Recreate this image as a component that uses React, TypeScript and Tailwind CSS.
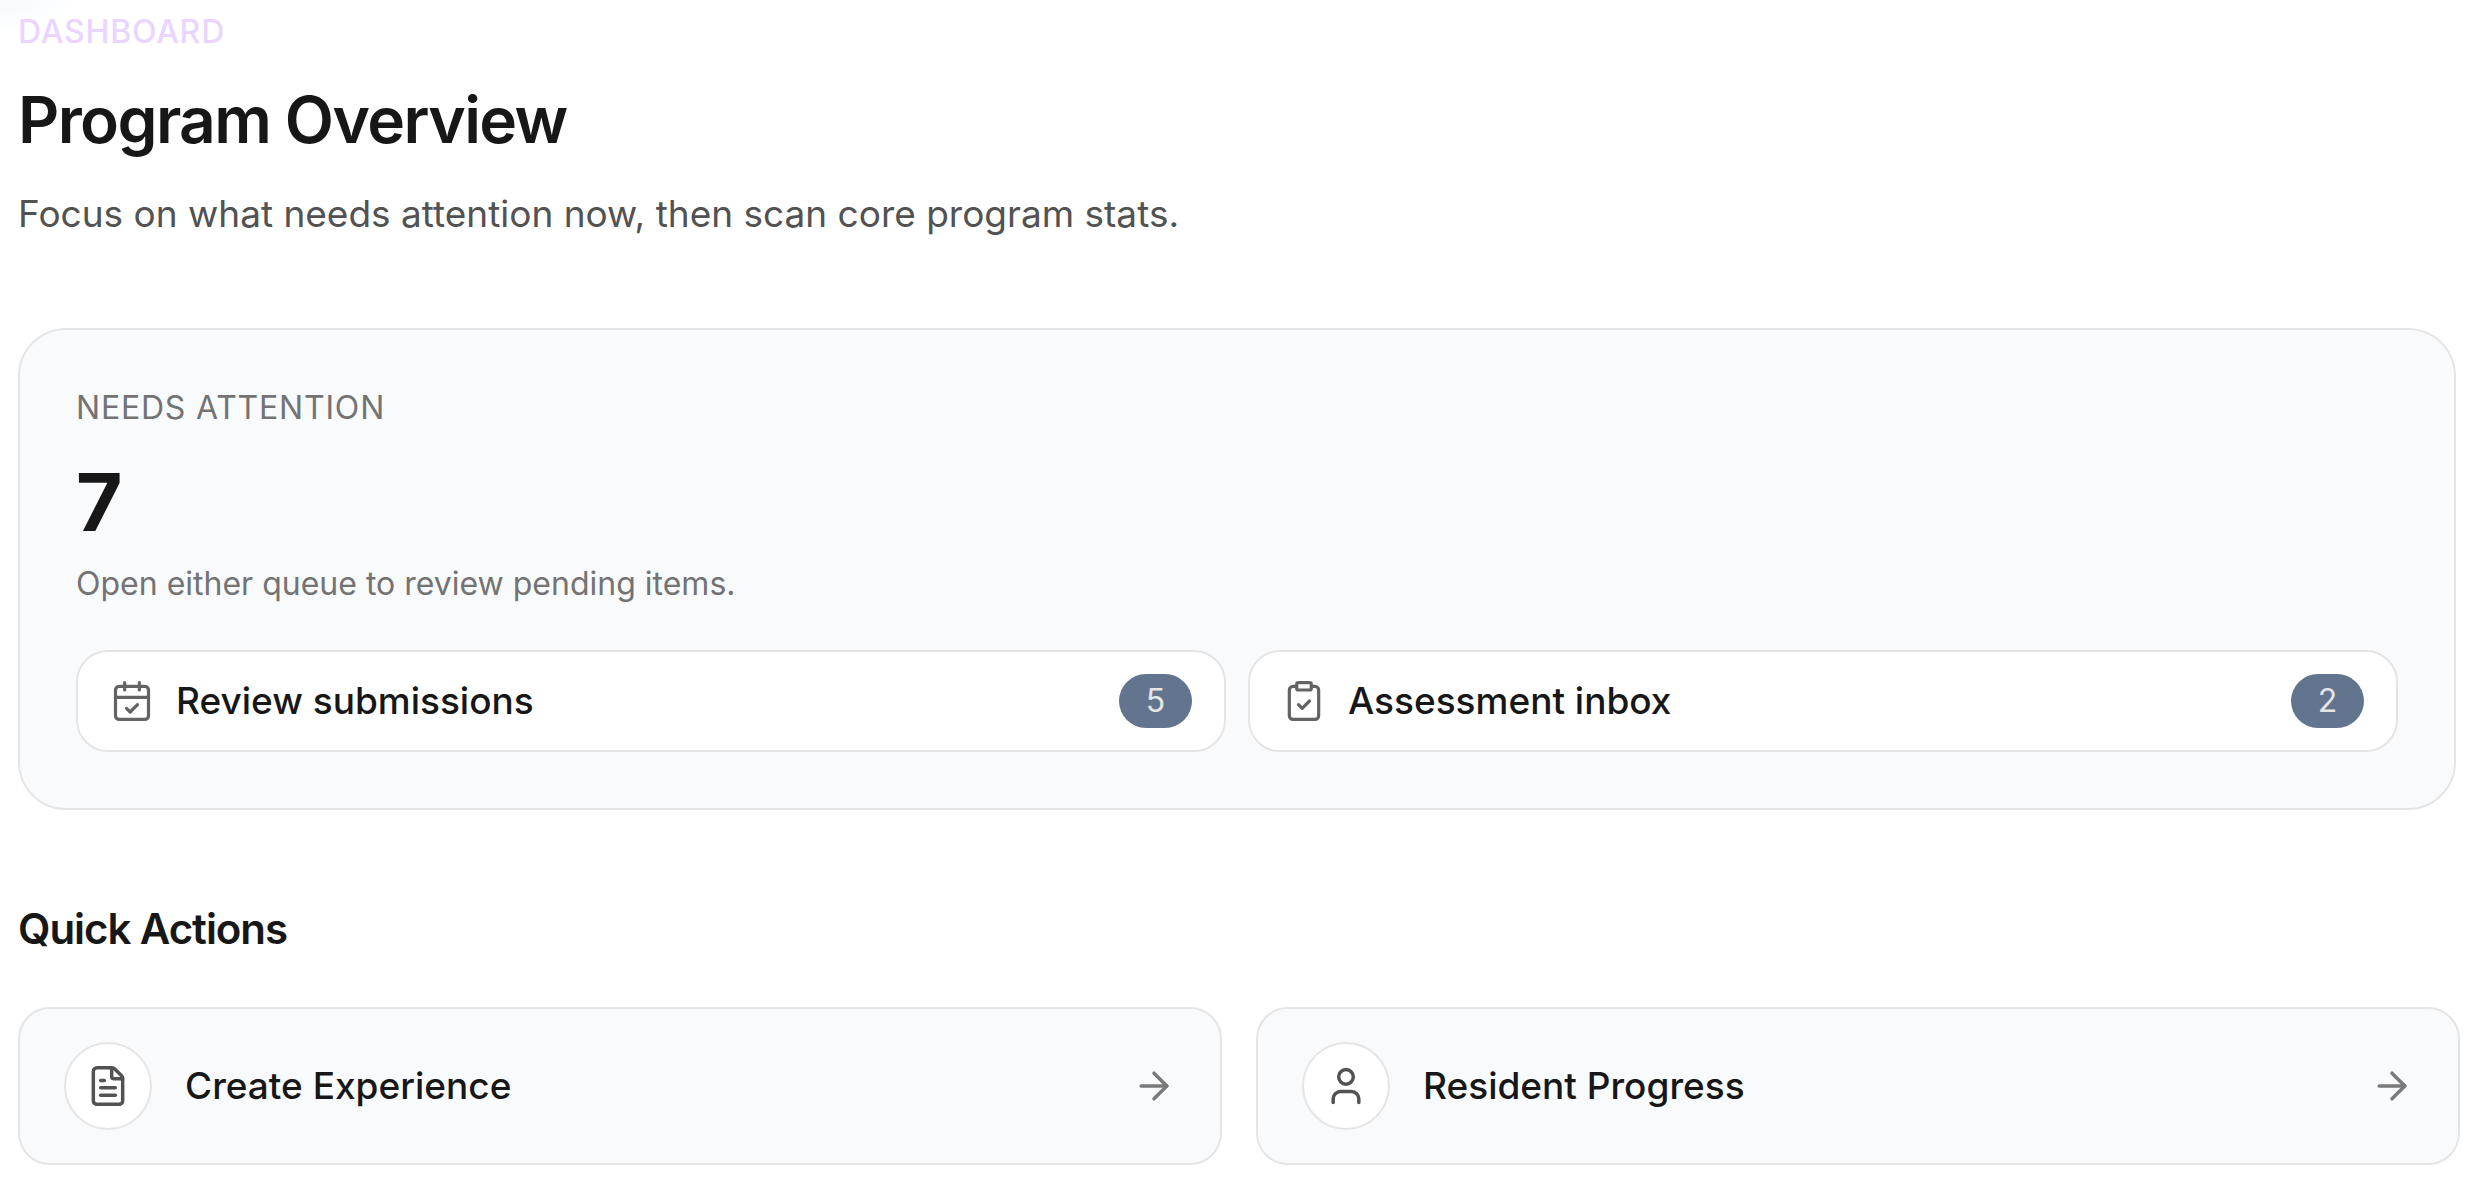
import { ArrowRight, CalendarCheck, ClipboardCheck, FileText, User } from 'lucide-react';

const queues = [
  { label: 'Review submissions', count: 5, Icon: CalendarCheck },
  { label: 'Assessment inbox', count: 2, Icon: ClipboardCheck },
];

const actions = [
  { label: 'Create Experience', Icon: FileText },
  { label: 'Resident Progress', Icon: User },
];

export default function App() {
  return (
    <main className="bg-white bg-[radial-gradient(ellipse_80px_36px_at_top_left,#f6fafc,#ffffff)] bg-no-repeat pt-3 pr-5 pl-[18px] font-[Inter,sans-serif] text-[#171717]">
      <header>
        <p className="text-[32px] leading-10 font-medium tracking-wide text-[#e9d5ff]">DASHBOARD</p>
        <h1 className="mt-[30px] text-[64px] leading-[76px] font-semibold tracking-tight">Program Overview</h1>
        <p className="mt-[26px] text-[37px] leading-[60px] text-[#525252]">
          Focus on what needs attention now, then scan core program stats.
        </p>
      </header>

      <section className="mt-[84px] mr-1 rounded-[48px] border-2 border-[#e5e5e5] bg-[#f8fafc] p-14">
        <h2 className="text-[32px] leading-11 tracking-wide text-[#737373]">NEEDS ATTENTION</h2>
        <p className="mt-8 text-[80px] leading-20 font-bold">7</p>
        <p className="mt-5 text-[32px] leading-11 text-[#737373]">Open either queue to review pending items.</p>
        <div className="mt-11 grid grid-cols-2 gap-[22px]">
          {queues.map(({ label, count, Icon }) => (
            <button
              key={label}
              type="button"
              className="flex h-[102px] items-center rounded-[32px] border-2 border-[#e5e5e5] bg-white px-8"
            >
              <Icon size={44} strokeWidth={1.75} color="#636363" />
              <span className="ml-[22px] text-[37px] leading-12 font-medium">{label}</span>
              <span className="ml-auto min-w-[73px] rounded-full bg-[#62748e] text-center text-[32px] leading-[54px] text-[#e5e5e5]">
                {count}
              </span>
            </button>
          ))}
        </div>
      </section>

      <section className="mt-[91px]">
        <h2 className="text-[42px] leading-14 font-semibold tracking-tight">Quick Actions</h2>
        <div className="mt-[50px] grid grid-cols-2 gap-[34px]">
          {actions.map(({ label, Icon }) => (
            <a
              key={label}
              href="#"
              className="flex h-[158px] items-center rounded-[32px] border-2 border-[#e5e5e5] bg-[#f8fafc] px-11"
            >
              <span className="flex size-[88px] items-center justify-center rounded-full border-2 border-[#e5e5e5] bg-white">
                <Icon size={44} strokeWidth={1.9} color="#525252" />
              </span>
              <span className="ml-[33px] text-[37px] leading-12 font-medium">{label}</span>
              <ArrowRight className="ml-auto" size={44} strokeWidth={1.9} color="#7a7a7a" />
            </a>
          ))}
        </div>
      </section>
    </main>
  );
}
